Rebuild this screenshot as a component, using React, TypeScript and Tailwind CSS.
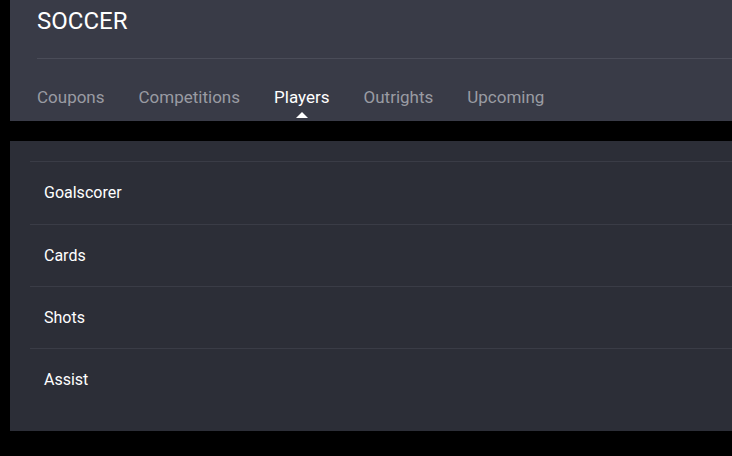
const tabs = ['Coupons', 'Competitions', 'Players', 'Outrights', 'Upcoming'];
const markets = ['Goalscorer', 'Cards', 'Shots', 'Assist'];

export default function App() {
  return (
    <div className="w-[732px] h-[456px] bg-black pl-[10px] overflow-hidden font-['Roboto',sans-serif]">
      <div className="bg-[#393b47] h-[121px] pl-[27px] flex flex-col">
        <div className="h-[59px] border-b border-[#4a4c58] flex items-start pt-[5px]">
          <h1 className="text-[24px] leading-[32px] text-white">SOCCER</h1>
        </div>
        <div className="flex gap-[34px] pt-[25px]">
          {tabs.map((tab) => (
            <div key={tab} className="relative">
              <span
                className={`text-[17px] leading-[26px] ${
                  tab === 'Players' ? 'text-white' : 'text-[#9a9ba3]'
                }`}
              >
                {tab}
              </span>
              {tab === 'Players' && (
                <div className="absolute left-1/2 -translate-x-1/2 top-[28px] w-0 h-0 border-l-[6px] border-r-[6px] border-b-[6px] border-l-transparent border-r-transparent border-b-white" />
              )}
            </div>
          ))}
        </div>
      </div>
      <div className="mt-[20px] bg-[#2c2e37] h-[290px] pt-[20px] pl-[20px]">
        {markets.map((m, i) => (
          <div
            key={m}
            className={`${i === 0 ? 'h-[63px]' : 'h-[62px]'} border-t border-[#3a3c46] flex items-center pl-[14px] text-[16px] text-white`}
          >
            {m}
          </div>
        ))}
      </div>
    </div>
  );
}
